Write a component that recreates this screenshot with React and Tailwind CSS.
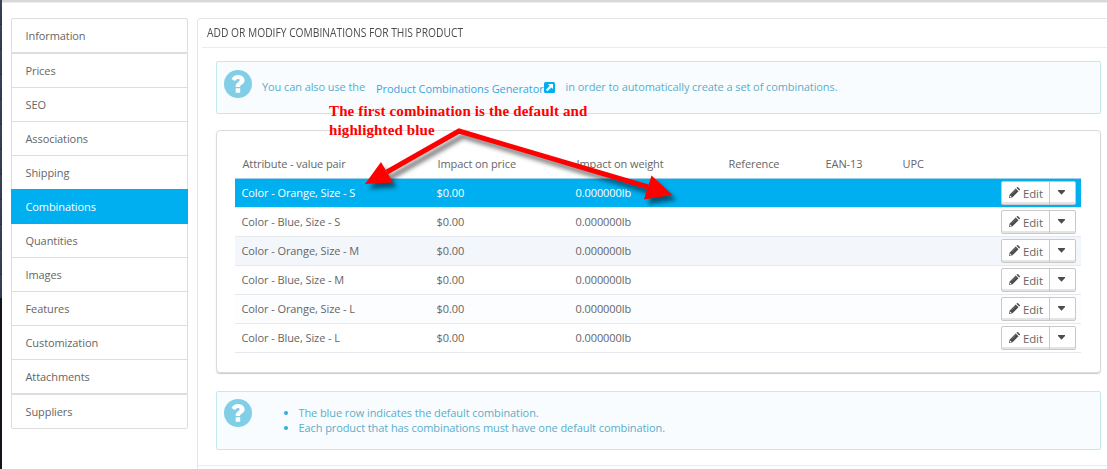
const tabs = ['Information', 'Prices', 'SEO', 'Associations', 'Shipping', 'Combinations', 'Quantities', 'Images', 'Features', 'Customization', 'Attachments', 'Suppliers'];

const itemStyle = (name) => {
  if (name === 'Combinations') return 'h-[35px] -mt-px bg-[#00aff0] border-[#00aff0] text-white font-medium';
  if (name === 'Information') return 'h-[35px] border-t rounded-t-[2px] border-[#dddddd]';
  if (name === 'Prices') return 'h-[35px] border-t border-[#dddddd]';
  if (name === 'Suppliers') return 'h-[35px] border-t rounded-b-[2px] border-[#dddddd]';
  return 'h-[34px] border-[#dddddd]';
};

const rows = [
  ['Color - Orange, Size - S', 'bg-[#00aff0] text-white font-medium'],
  ['Color - Blue, Size - S', 'bg-white'],
  ['Color - Orange, Size - M', 'bg-[#f3f7fb]'],
  ['Color - Blue, Size - M', 'bg-white'],
  ['Color - Orange, Size - L', 'bg-[#fbfdff]'],
  ['Color - Blue, Size - L', 'bg-white'],
];

const columns = 'grid grid-cols-[195px_139px_152px_97px_77px_105px_1fr]';

function Help() {
  return (
    <svg className="h-7 w-7 shrink-0" viewBox="0 0 28 28">
      <circle cx="14" cy="14" r="14" fill="#81cfe6" />
      <path d="M7.500 9C8.900 6.400 11 4.900 14.200 4.900c3.400 0 6.400 2.200 6.400 5.400 0 4-4.400 4.300-4.400 6.200v.5h-4.500v-1c0-3.500 3.900-3.900 3.900-5.500 0-.9-.7-1.400-1.600-1.400-1.300 0-2.100.9-3 2z" fill="#fff" />
      <rect x="11.700" y="18.300" width="4.500" height="4.500" rx=".4" fill="#fff" />
    </svg>
  );
}

function EditButton() {
  return (
    <div className="mt-[2px] flex h-6 w-[75px] rounded-[2px] border border-[#c9c9c9] bg-white text-[#666] font-normal shadow-[inset_0_-2px_0_#e4e4e4]">
      <div className="flex w-[48px] items-center border-r border-[#c9c9c9] pl-[7px]">
        <svg className="mb-[2px] h-[11px] w-[11px] shrink-0" viewBox="0 0 11 11">
          <path d="M0 11 .7 7.5 6.7 1.5 9.5 4.3 3.5 10.3z M7.4.8 8.1.2q.5-.4 1 0L10.8 1.900q.4.5 0 1L10.200 3.600z" fill="#4b4b4b" />
          <path d="M1.100 8.400 2.600 9.900 1.300 10.200.8 9.700z" fill="#fff" />
          <path d="M2.300 7.300 6.900 2.700" stroke="#999" strokeWidth=".6" />
        </svg>
        <span className="ml-[3px] mt-[2px] text-[11.4px]">Edit</span>
      </div>
      <div className="flex flex-1 items-start justify-center pt-[8px] pr-[2px]">
        <svg className="h-[5px] w-[7px]" viewBox="0 0 7 5"><path d="M0 0h7v1L3.500 4.800 0 1z" fill="#4d4d4d" /></svg>
      </div>
    </div>
  );
}

export default function App() {
  return (
    <div className="relative flex h-[469px] w-[1107px] overflow-hidden bg-white font-['Open_Sans',sans-serif] text-[11px] tracking-[-0.09px] text-[#666]">
      <div className="flex w-[2px] shrink-0 flex-col bg-[#12141c]">
        <div className="h-[298px] bg-[repeating-linear-gradient(to_bottom,#3a4358_0px,#303a50_24px,#1e2637_25px)]" />
      </div>
      <div className="flex min-w-0 flex-1 flex-col">
        <div className="h-[3px] shrink-0 border-b border-[#eeeeee] bg-[#d8d8d8]" />
        <div className="flex flex-1 pt-[15px]">
          <nav className="ml-[9px] w-[177px] shrink-0">
            {tabs.map((name) => (
              <div key={name} className={`flex items-center border-x border-b pl-[13.5px] pt-[2px] ${itemStyle(name)}`}>
                <span>{name}</span>
              </div>
            ))}
          </nav>
          <main className="ml-[9px] flex flex-1 flex-col rounded-tl-[4px] border-l border-t border-[#e3e5e7]">
            <h1 className="ml-[4px] flex h-[29px] items-center whitespace-nowrap border-b border-[#eaedef] pl-[5px] pt-px text-[12.5px] tracking-normal text-[#4c4c4c]">
              <span className="inline-block origin-left scale-x-[0.82]">ADD OR MODIFY COMBINATIONS FOR THIS PRODUCT</span>
            </h1>
            <section className="ml-[18px] mt-[13px] flex h-[53px] w-[885px] rounded-[2px] border border-[#c5e9f3] bg-[#f8fcff] pl-[7px] pt-[8px] text-[#5aaec9]">
              <Help />
              <p className="ml-[10px] mt-[9px] flex h-4 items-center whitespace-nowrap">
                <span>You can also use the</span>
                <span className="ml-[11px] mt-[4px] text-[#3aa5df]">Product Combinations Generator</span>
                <svg className="h-[11px] w-[11px]" viewBox="0 0 11 11">
                  <rect width="11" height="11" rx="1.500" fill="#00aff0" />
                  <path d="M4 2h5v5L7.400 5.400 3.400 9.200 1.900 7.700 5.700 3.700z" fill="#fff" />
                </svg>
                <span className="ml-[11px]">in order to automatically create a set of combinations.</span>
              </p>
            </section>
            <section className="ml-[18px] mt-4 h-[243px] w-[885px] rounded-[4px] border border-[#dadada] pl-[18px] pr-[19px] shadow-[0_1px_1px_#ccc]">
              <div className={`${columns} h-[48px] border-b border-[#a0d0e8] pl-[7.5px] pt-[25px]`}>
                {['Attribute - value pair', 'Impact on price', 'Impact on weight', 'Reference', 'EAN-13', 'UPC'].map((label) => (
                  <span key={label} className="whitespace-nowrap">{label}</span>
                ))}
              </div>
              {rows.map(([name, style]) => (
                <div key={name} className={`grid h-[29px] grid-cols-[195px_139px_1fr_80px] border-b border-[#e6eaee] pl-[6.5px] ${style}`}>
                  <span className="self-center whitespace-nowrap">{name}</span>
                  <span className="self-center">$0.00</span>
                  <span className="self-center">0.000000lb</span>
                  <EditButton />
                </div>
              ))}
            </section>
            <section className="ml-[18px] mt-[18px] flex h-[59px] w-[885px] rounded-[2px] border border-[#c5e9f3] bg-[#f8fcff] pl-[7px] pt-[7px] text-[#5aaec9]">
              <Help />
              <ul className="ml-[46.5px] mt-[6px] list-disc leading-[15px] marker:text-[#32addb]">
                <li>The blue row indicates the default combination.</li>
                <li>Each product that has combinations must have one default combination.</li>
              </ul>
            </section>
            <footer className="mt-[15px] flex-1 border-t border-[#e8eaec] bg-[#fcfdfe]" />
          </main>
        </div>
      </div>
      <p className="absolute left-[329px] top-[102px] whitespace-nowrap font-['Liberation_Serif',serif] text-[15px] font-bold leading-[19px] tracking-[0.13px] text-[#f00]">
        The first combination is the default and<br />highlighted blue
      </p>
      <svg className="absolute left-0 top-0 h-[469px] w-[1107px] drop-shadow-[4px_5px_2px_rgba(0,0,0,0.5)]" viewBox="0 0 1107 469">
        <path d="M387 172 459 131 648 187" fill="none" stroke="#f00" strokeWidth="5" />
        <path d="M365 184 381 162 393 182.500zM672.500 195 651.500 175.500 644 199.500z" fill="#f00" />
      </svg>
    </div>
  );
}
